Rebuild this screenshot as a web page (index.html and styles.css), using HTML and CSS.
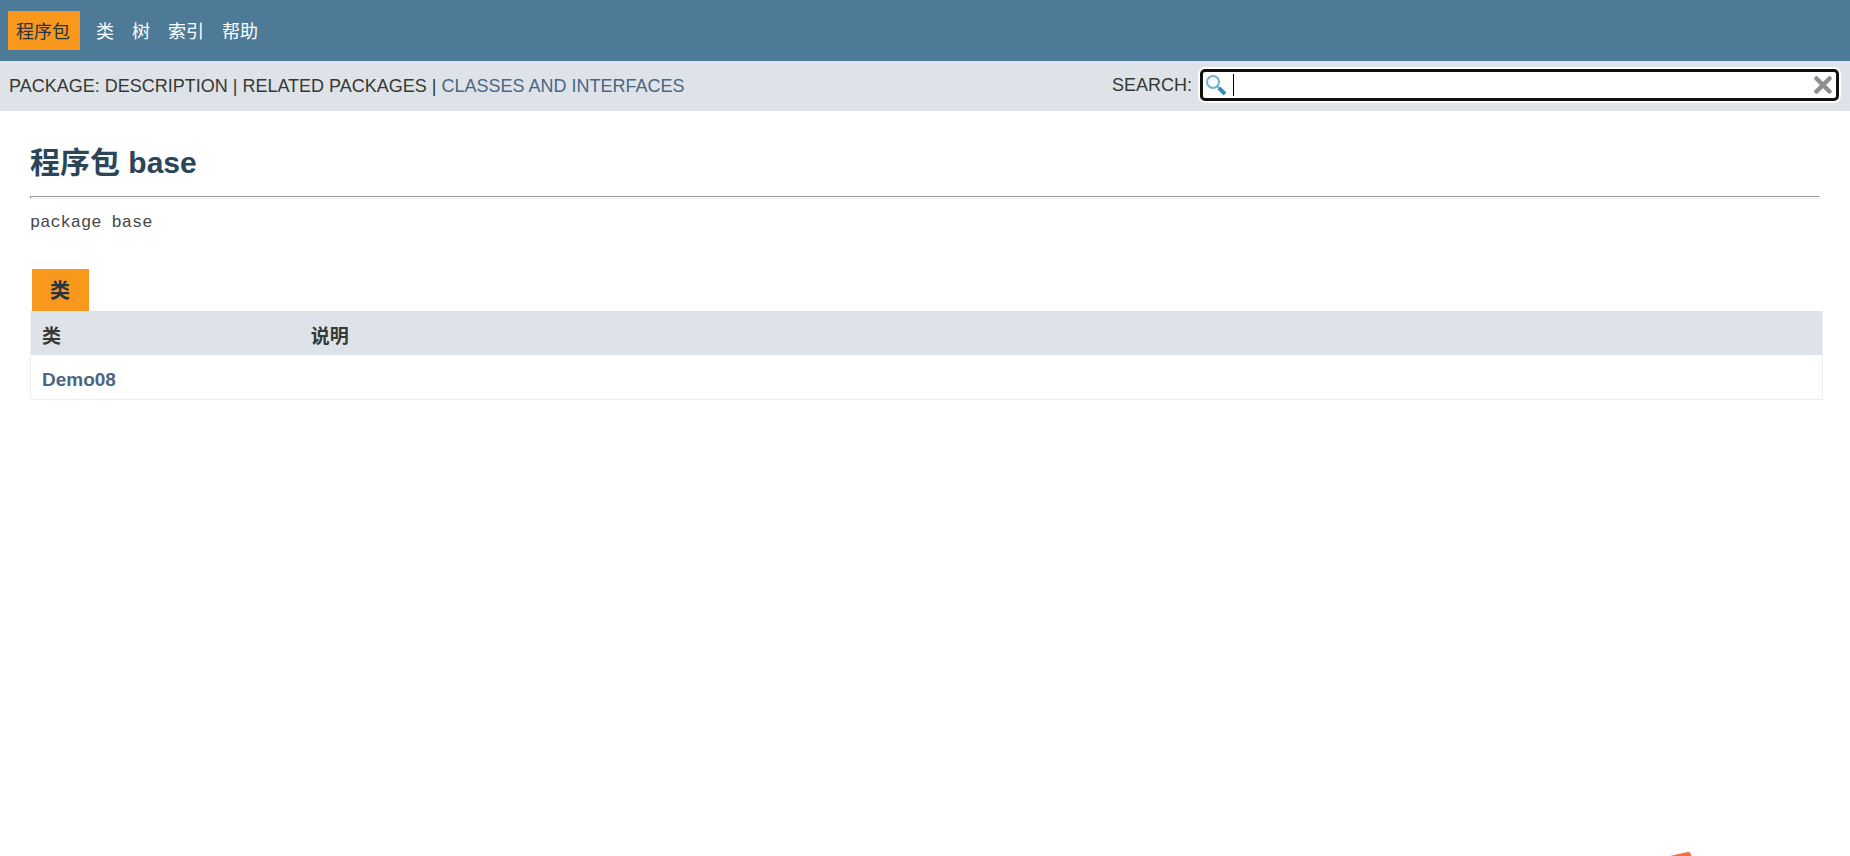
FILE: index.html
```
<!DOCTYPE html>
<html lang="zh">
<head>
    <meta charset="UTF-8">
    <meta name="viewport" content="width=device-width, initial-scale=1">
    <title>base</title>
    <link rel="stylesheet" href="styles.css">
</head>
<body>
    <header>
        <nav class="top-nav">
            <ul class="nav-list">
                <li class="nav-bar-cell1-rev">程序包</li>
                <li><a href="#class">类</a></li>
                <li><a href="#tree">树</a></li>
                <li><a href="#index">索引</a></li>
                <li><a href="#help">帮助</a></li>
            </ul>
        </nav>
        <div class="sub-nav">
            <div class="sub-nav-list">PACKAGE: DESCRIPTION | RELATED PACKAGES | <a href="#class-summary">CLASSES AND INTERFACES</a></div>
            <div class="nav-list-search">
                <label for="search-input">SEARCH:</label>
                <div class="search-box">
                    <svg class="glass" viewBox="0 0 20 20" aria-hidden="true">
                        <path d="M11 11l3 3" stroke="#7fb2cc" stroke-width="2"/>
                        <path d="M13 13l6 6" stroke="#2d8cc4" stroke-width="4"/>
                        <circle cx="7" cy="7" r="6" fill="#f4fafd" stroke="#78afc6" stroke-width="2"/>
                    </svg>
                    <input type="text" id="search-input" autocomplete="off">
                    <span class="caret"></span>
                    <button type="reset" class="reset-button" aria-label="reset">
                        <svg viewBox="0 0 18 18" aria-hidden="true">
                            <path d="M2.500 2.500l13 13M15.500 2.500l-13 13" stroke="#8a8f92" stroke-width="4.500" stroke-linecap="round"/>
                        </svg>
                    </button>
                </div>
            </div>
        </div>
    </header>
    <main>
        <h1 class="title">程序包 base</h1>
        <hr>
        <div class="package-signature">package base</div>
        <div class="caption" id="class-summary"><span>类</span></div>
        <table class="summary-table" aria-labelledby="class-summary">
            <thead>
                <tr>
                    <th class="col-first">类</th>
                    <th>说明</th>
                </tr>
            </thead>
            <tbody>
                <tr>
                    <td class="col-first"><a href="#Demo08">Demo08</a></td>
                    <td></td>
                </tr>
            </tbody>
        </table>
    </main>
    <svg class="corner-mark" viewBox="0 0 22 4" aria-hidden="true">
        <path d="M0 4Q8 2 18 0Q21 0 21 4Z" fill="#fb6c3a"/>
    </svg>
</body>
</html>
```

FILE: styles.css
```
* {
    box-sizing: border-box;
}
body {
    margin: 0;
    background-color: #fff;
    color: #353833;
    font-family: "Liberation Sans", "Noto Sans CJK SC", sans-serif;
    font-size: 18px;
}
a {
    color: #4a6782;
    text-decoration: none;
}
.top-nav {
    height: 61px;
    padding: 11px 8px;
    background-color: #4d7a97;
    color: #fff;
}
.nav-list {
    display: flex;
    gap: 18px;
    margin: 0;
    padding: 0;
    list-style: none;
    line-height: 35px;
}
.nav-list li {
    padding-top: 4px;
}
.nav-list a {
    color: #fff;
}
.nav-list .nav-bar-cell1-rev {
    margin-right: -2px;
    padding: 4px 10px 0 8px;
    background-color: #f8981d;
    color: #253441;
}
.sub-nav {
    display: flex;
    align-items: center;
    justify-content: space-between;
    height: 50px;
    padding: 0 11px 0 9px;
    background-color: #dee3e9;
}
.nav-list-search {
    display: flex;
    align-items: center;
    gap: 8px;
    padding-bottom: 2px;
}
.search-box {
    display: flex;
    align-items: center;
    position: relative;
    width: 35vw;
    max-width: 639px;
    height: 32px;
    padding: 0 4px 0 3px;
    background-color: #fff;
    border: 3px solid #101010;
    border-radius: 5px;
    box-shadow: 0 0 0 2px #fff;
}
#search-input {
    position: absolute;
    inset: 0;
    width: 100%;
    padding: 0 30px;
    border: 0;
    background: transparent;
    outline: none;
    font: inherit;
}
.glass {
    width: 20px;
    height: 20px;
}
.caret {
    width: 1px;
    height: 22px;
    margin-left: 7px;
    background-color: #000;
}
.reset-button {
    display: flex;
    position: relative;
    width: 18px;
    height: 18px;
    margin-left: auto;
    padding: 0;
    border: 0;
    background: transparent;
}
main {
    padding: 32px 30px;
}
.title {
    margin: 0;
    color: #2c4557;
    font-size: 30px;
    line-height: 40px;
}
hr {
    height: 3px;
    margin: 13px 0 12px;
    border: 1px solid #eee;
    border-top-color: #9a9a9a;
    border-left-color: #9a9a9a;
}
.package-signature {
    color: #474747;
    font-family: "Liberation Mono", monospace;
    font-size: 17px;
    line-height: 24px;
}
.caption {
    display: flex;
    margin: 34px 0 0 2px;
    font-size: 20px;
    font-weight: bold;
}
.caption span {
    padding: 2px 18px 0;
    border-right: 1px solid #f8981d;
    background-color: #f8981d;
    color: #253441;
    line-height: 40px;
}
.summary-table {
    width: calc(100% + 3px);
    border: 1px solid #eee;
    border-top: 0;
    border-spacing: 0;
    font-size: 19px;
    table-layout: fixed;
}
.summary-table th,
.summary-table td {
    height: 44px;
    padding: 6px 11px 0;
    text-align: left;
}
.summary-table th {
    padding-top: 2px;
    background-color: #dee3e9;
}
.summary-table .col-first {
    width: 15%;
    font-weight: bold;
}
.corner-mark {
    position: fixed;
    right: 158px;
    bottom: 0;
    width: 22px;
    height: 4px;
}
```
